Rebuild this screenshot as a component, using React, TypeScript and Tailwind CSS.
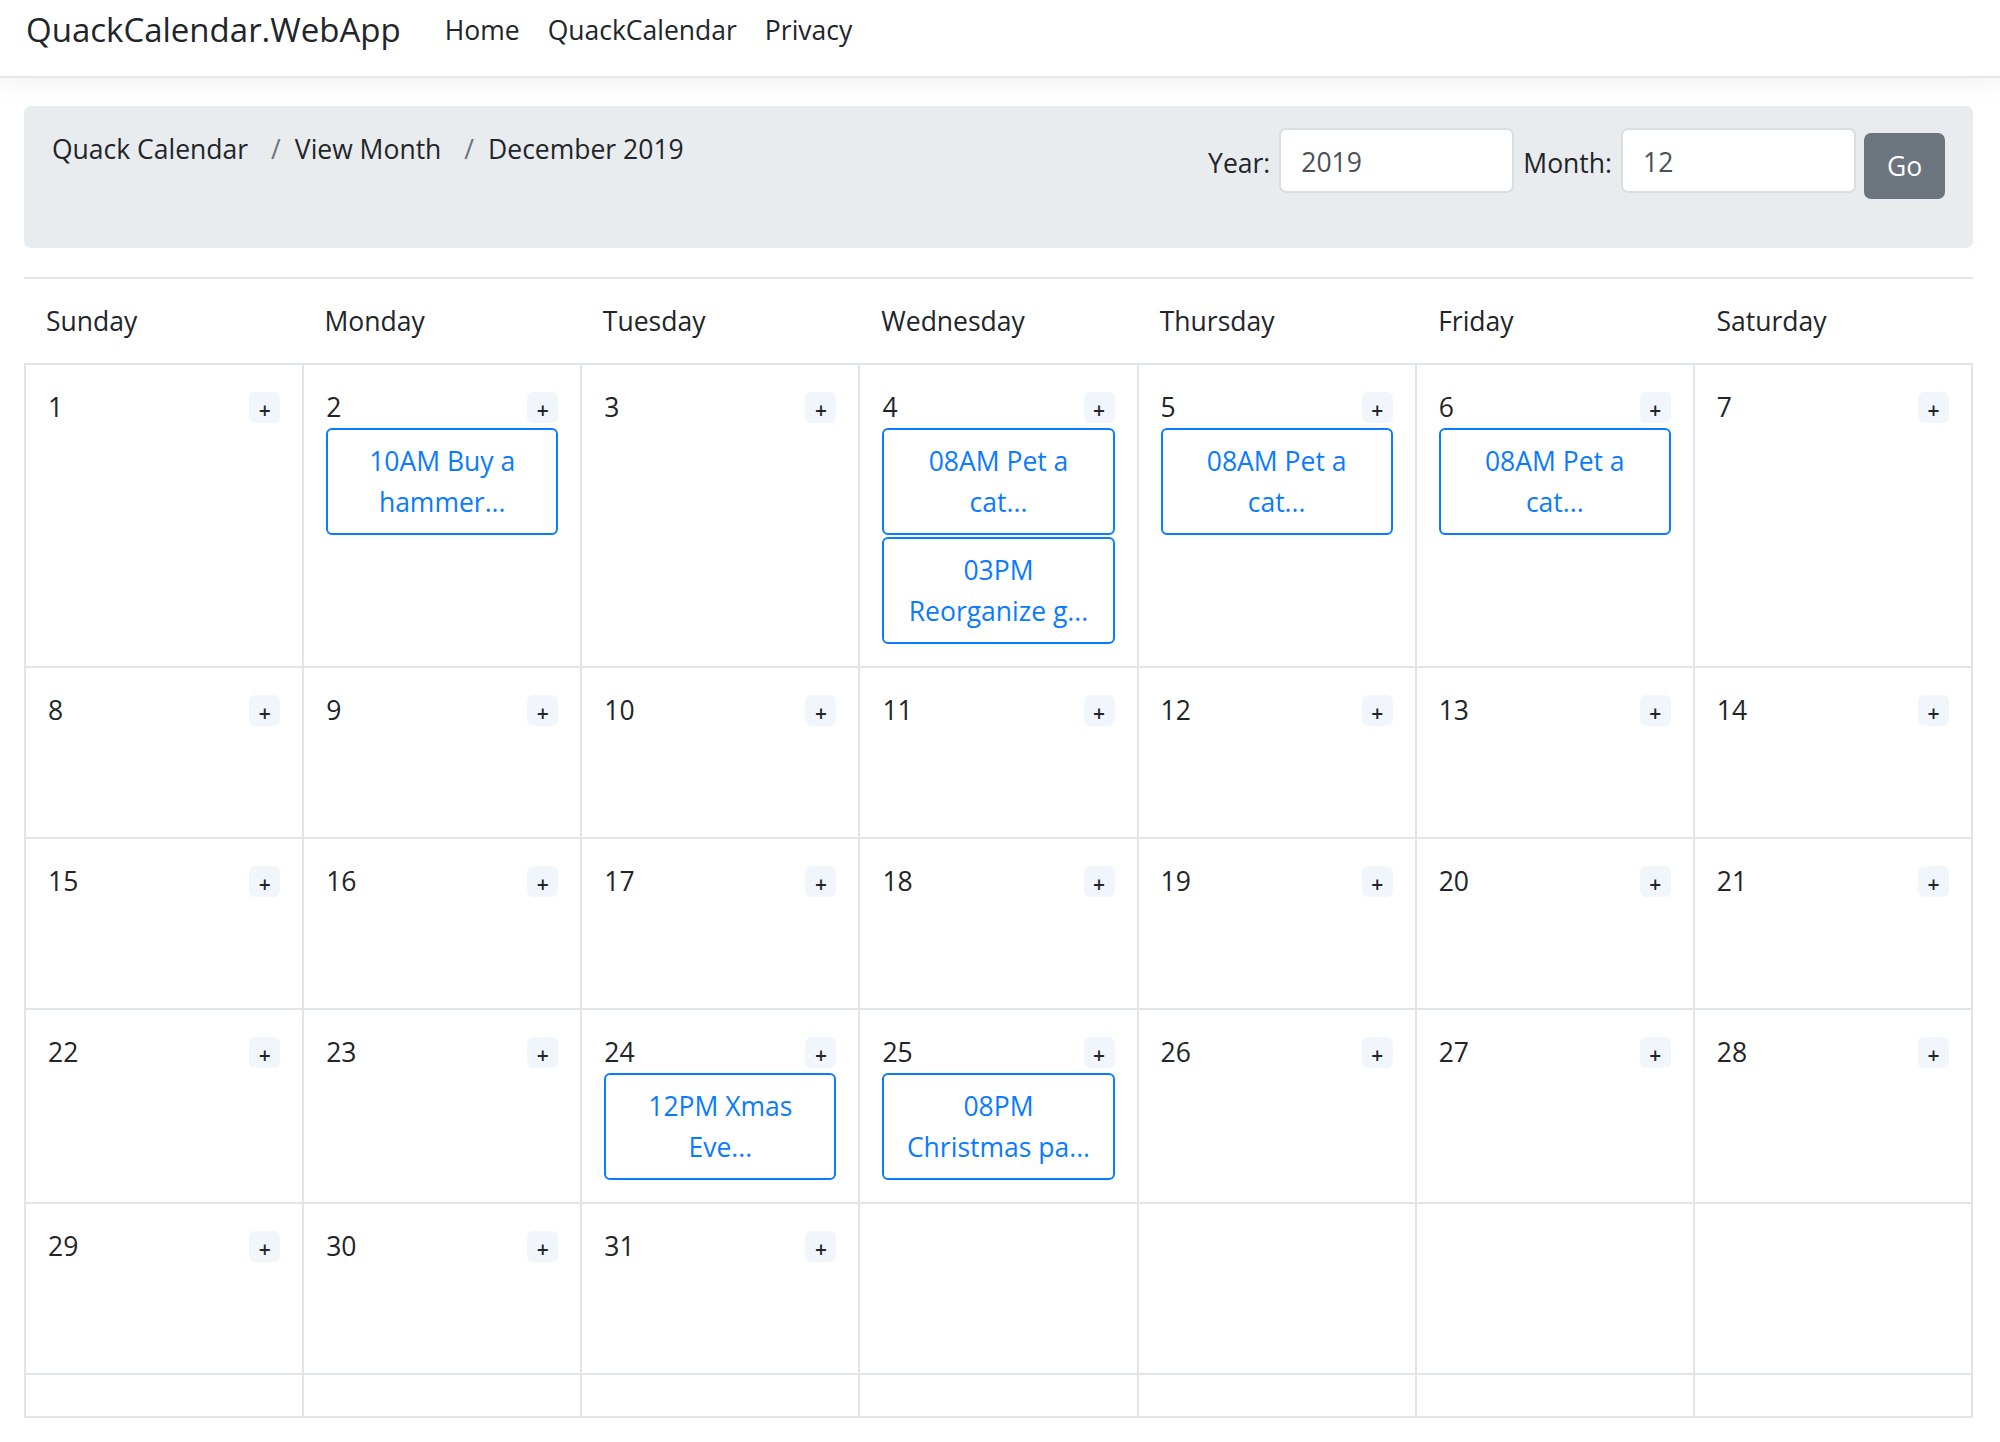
import React from "react";

type Ev = { l1: string; l2: string };

const events: Record<number, Ev[]> = {
  2: [{ l1: "10AM Buy a", l2: "hammer..." }],
  4: [
    { l1: "08AM Pet a", l2: "cat..." },
    { l1: "03PM", l2: "Reorganize g..." },
  ],
  5: [{ l1: "08AM Pet a", l2: "cat..." }],
  6: [{ l1: "08AM Pet a", l2: "cat..." }],
  24: [{ l1: "12PM Xmas", l2: "Eve..." }],
  25: [{ l1: "08PM", l2: "Christmas pa..." }],
};

const days = ["Sunday", "Monday", "Tuesday", "Wednesday", "Thursday", "Friday", "Saturday"];

function DayCell({ day }: { day: number | null }) {
  if (day === null) {
    return <div className="border-r-2 border-b-2 border-[#e1e5e9] min-h-[171px]" />;
  }
  const evs = events[day] || [];
  return (
    <div className="border-r-2 border-b-2 border-[#e1e5e9] min-h-[171px] px-[22px] pt-[22px] pb-[22px]">
      <div className="flex items-center justify-between h-[41px]">
        <span>{day}</span>
        <span className="w-[31px] h-[31px] rounded-[6px] bg-[#f1f6fd] flex items-center justify-center text-[21px] font-semibold leading-none pt-[6px] text-[#212529]">
          +
        </span>
      </div>
      {evs.map((e, i) => (
        <div
          key={i}
          className={
            "h-[107px] border-2 border-[#0a7bff] rounded-[6px] flex flex-col items-center justify-center text-[#0a7bff] whitespace-nowrap " +
            (i > 0 ? "mt-[2px]" : "")
          }
        >
          <span>{e.l1}</span>
          <span>{e.l2}</span>
        </div>
      ))}
    </div>
  );
}

export default function App() {
  const cells: (number | null)[] = [];
  for (let d = 1; d <= 31; d++) cells.push(d);
  while (cells.length < 35) cells.push(null);

  return (
    <div className="min-h-screen bg-white text-[#212529] font-['Open_Sans',sans-serif] text-[26.5px] leading-[41px]">
      <nav className="h-[78px] border-b-2 border-[#e6e6e6] shadow-[0_7px_21px_rgba(0,0,0,0.05)] bg-white">
        <div className="flex items-center pt-[6px] pl-[26px] h-[54px]">
          <span className="text-[33px] leading-[48px] mr-[30px]">QuackCalendar.WebApp</span>
          <a className="px-[14px]">Home</a>
          <a className="px-[14px]">QuackCalendar</a>
          <a className="px-[14px]">Privacy</a>
        </div>
      </nav>

      <div className="ml-[24px] w-[1949px] mt-[28px]">
        <div className="h-[142px] bg-[#e9ecef] rounded-[7px] flex justify-between items-start pl-[28px] pr-[28px]">
          <div className="flex pt-[23px]">
            <span>Quack Calendar</span>
            <span className="pl-[23px] pr-[14px] text-[#6c757d]">/</span>
            <span>View Month</span>
            <span className="pl-[23px] pr-[14px] text-[#6c757d]">/</span>
            <span>December 2019</span>
          </div>
          <div className="flex items-start">
            <span className="mt-[37px] mr-[9px]">Year:</span>
            <div className="mt-[22px] w-[235px] h-[65px] bg-white border-2 border-[#d9dee3] rounded-[7px] flex items-center px-[20px] pt-[4px] text-[#495057]">
              2019
            </div>
            <span className="mt-[37px] ml-[9px] mr-[9px]">Month:</span>
            <div className="mt-[22px] w-[235px] h-[65px] bg-white border-2 border-[#d9dee3] rounded-[7px] flex items-center px-[20px] pt-[4px] text-[#495057]">
              12
            </div>
            <div className="mt-[27px] ml-[8px] w-[81px] h-[66px] bg-[#6c757d] text-white rounded-[7px] flex items-center justify-center">
              Go
            </div>
          </div>
        </div>

        <div className="mt-[29px] border-t-2 border-[#e1e5e9] grid grid-cols-7 h-[86px] items-center">
          {days.map((d) => (
            <div key={d} className="px-[22px] pt-[1px]">
              {d}
            </div>
          ))}
        </div>

        <div className="border-l-2 border-t-2 border-[#e1e5e9] grid grid-cols-7">
          {cells.map((c, i) => (
            <DayCell key={i} day={c} />
          ))}
          {days.map((d) => (
            <div key={"e" + d} className="border-r-2 border-b-2 border-[#e1e5e9] h-[43px]" />
          ))}
        </div>
      </div>
    </div>
  );
}
